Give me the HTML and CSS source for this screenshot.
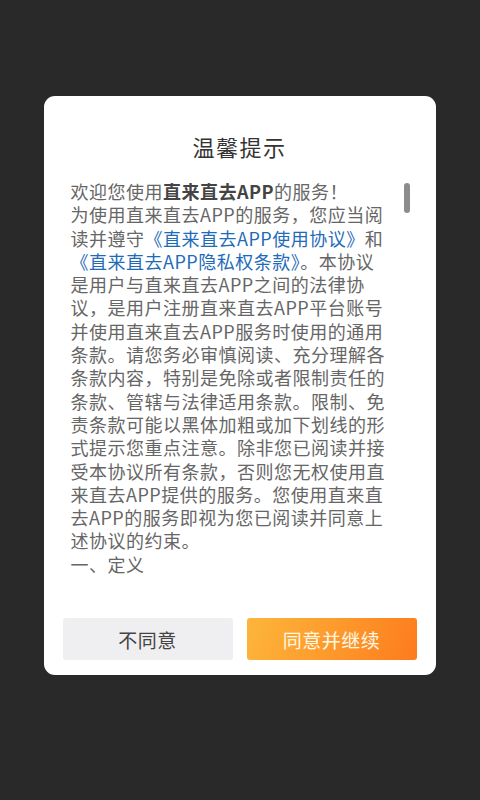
FILE: index.html
```html
<!DOCTYPE html>
<html lang="zh-CN">
<head>
<meta charset="utf-8">
<title>温馨提示</title>
<link rel="stylesheet" href="styles.css">
</head>
<body>
<div class="overlay">
  <div class="dialog">
    <h1 class="title">温馨提示</h1>
    <div class="content">
      <p class="text">欢迎您使用<b class="strong">直来直去APP</b>的服务！<br>为使用直来直去APP的服务，您应当阅<br>读并遵守<a class="link">《直来直去APP使用协议》</a>和<br><a class="link">《直来直去APP隐私权条款》</a>。本协议<br>是用户与直来直去APP之间的法律协<br>议，是用户注册直来直去APP平台账号<br>并使用直来直去APP服务时使用的通用<br>条款。请您务必审慎阅读、充分理解各<br>条款内容，特别是免除或者限制责任的<br>条款、管辖与法律适用条款。限制、免<br>责条款可能以黑体加粗或加下划线的形<br>式提示您重点注意。除非您已阅读并接<br>受本协议所有条款，否则您无权使用直<br>来直去APP提供的服务。您使用直来直<br>去APP的服务即视为您已阅读并同意上<br>述协议的约束。<br>一、定义</p>
      <div class="scrollbar"></div>
    </div>
    <div class="actions">
      <button class="btn btn-cancel">不同意</button>
      <button class="btn btn-ok">同意并继续</button>
    </div>
  </div>
</div>
</body>
</html>
```

FILE: styles.css
```css
html, body {
  margin: 0;
  padding: 0;
}
body {
  background: #2a292a;
  width: 480px;
  height: 800px;
  overflow: hidden;
  font-family: "Noto Sans CJK SC", "Noto Sans", sans-serif;
}
.overlay {
  display: flex;
  justify-content: center;
  padding-top: 96px;
  padding-right: 1px;
}
.dialog {
  width: 392px;
  height: 579px;
  background: #ffffff;
  border-radius: 11px;
  display: flex;
  flex-direction: column;
  box-sizing: border-box;
}
.title {
  margin: 0;
  padding-top: 35px;
  height: 30px;
  line-height: 30px;
  text-align: center;
  font-size: 22px;
  font-weight: normal;
  letter-spacing: 1.5px;
  color: #333333;
}
.content {
  flex: 1;
  position: relative;
  padding: 19px 0 0 27px;
  overflow: hidden;
}
.text {
  margin: 0;
  font-size: 18px;
  line-height: 23.3px;
  letter-spacing: 0.5px;
  color: #666666;
  white-space: nowrap;
}
.strong {
  font-weight: bold;
  color: #444444;
}
.link {
  color: #1e6bb8;
  text-decoration: none;
}
.scrollbar {
  position: absolute;
  left: 360px;
  top: 22px;
  width: 6px;
  height: 30px;
  border-radius: 3px;
  background: #8c8c8c;
}
.actions {
  display: flex;
  gap: 14px;
  padding: 0 19px 15px 19px;
}
.btn {
  flex: 1;
  height: 42px;
  border: none;
  border-radius: 3px;
  font-family: "Noto Sans CJK SC", "Noto Sans", sans-serif;
  font-size: 19px;
  letter-spacing: 0.5px;
  padding: 0;
}
.btn-cancel {
  background: #efeef0;
  color: #444444;
}
.btn-ok {
  background: linear-gradient(110deg, #fdb63b 0%, #fd9a2c 50%, #fd7b1d 100%);
  color: #fff7e6;
}
```
